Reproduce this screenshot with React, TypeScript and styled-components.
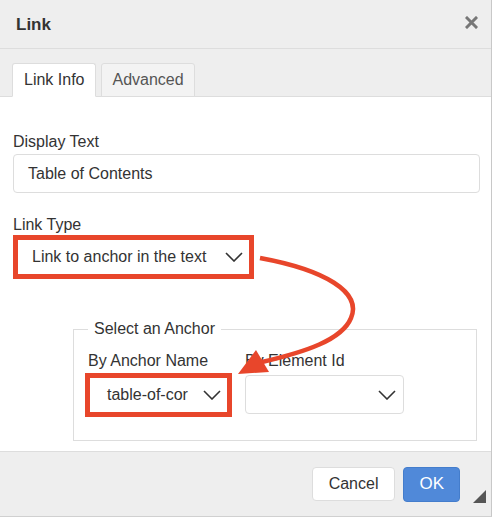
import styled, { createGlobalStyle } from "styled-components";

const Global = createGlobalStyle`
    * { box-sizing: border-box; }
    body { margin: 0; background: #fff; font-family: "Liberation Sans", Arial, sans-serif; color: #333; }
`

const RED = "#e8462b";

const Dialog = styled.div`
    position: relative; width: 492px; height: 517px;
    display: flex; flex-direction: column;
    border-right: 1px solid #c8c8c8; border-bottom: 1px solid #d0d0d0;
    background: #fff;
`
const Header = styled.div`
    height: 49px; padding: 0 13px 0 16px;
    display: flex; align-items: center; justify-content: space-between;
    background: #eee; border-bottom: 1px solid #ddd;
    h1 { margin: 0; font-size: 17px; font-weight: 700; color: #333; padding-top: 1px; }
`
const Close = styled.svg`width: 13px; height: 13px; margin-bottom: 4px;`

const TabBar = styled.div`
    height: 48px; padding-left: 12px;
    display: flex; align-items: flex-end; gap: 5px;
    background: #eee; border-bottom: 1px solid #ddd;
`
const Tab = styled.div<{ $active?: boolean }>`
    height: 34px; padding: 0 ${({ $active }) => $active ? 11 : 10}px; margin-bottom: -1px;
    display: flex; align-items: center;
    font-size: 16px; color: ${({ $active }) => $active ? "#333" : "#555"};
    background: ${({ $active }) => $active ? "#fff" : "#f3f3f3"};
    border: 1px solid #ddd; border-bottom: 1px solid ${({ $active }) => $active ? "#fff" : "#ddd"};
    border-radius: 3px 3px 0 0;
`
const Body = styled.div`
    flex: 1; padding: 36px 11px 0 13px; background: #fff;
`
const Label = styled.div`
    font-size: 16px; line-height: 18px; color: #333; margin-bottom: 3px;
`
const Input = styled.div`
    height: 39px; padding: 0 14px; margin-bottom: 23px;
    display: flex; align-items: center;
    font-size: 16px; color: #333;
    border: 1px solid #ddd; border-radius: 4px;
`
const Select = styled.div<{ $marked?: boolean; $w: number; $pad?: number }>`
    width: ${({ $w }) => $w}px;
    height: ${({ $marked }) => $marked ? 44 : 39}px;
    margin: ${({ $marked }) => $marked ? "-2px 0 0 -3px" : "0"};
    padding: 0 ${({ $marked }) => $marked ? 6 : 7}px 0 ${({ $pad }) => $pad ?? 14}px;
    display: flex; align-items: center; justify-content: space-between;
    font-size: 16px; color: #333; background: #fff;
    border: ${({ $marked }) => $marked ? `5px solid ${RED}` : "1px solid #ddd"};
    border-radius: ${({ $marked }) => $marked ? 0 : 4}px;
`
const LinkTypeRow = styled.div`padding-left: 3px;`
const Chevron = styled.svg`width: 18px; height: 10px; flex-shrink: 0;`

const Fieldset = styled.fieldset`
    margin: 41px 0 0 60px; width: 404px;
    padding: 14px 14px 23px;
    border: 1px solid #ddd;
    legend { padding: 0 6px; font-size: 16px; line-height: 18px; color: #333; }
`
const Columns = styled.div`
    display: grid; grid-template-columns: 141px 159px; column-gap: 17px; align-items: start;
    ${Label} { margin-bottom: 5px; }
`
const Col = styled.div<{ $shift?: number }>`margin-left: ${({ $shift }) => $shift ?? 0}px;`

const Footer = styled.div`
    position: relative; height: 65px; padding-right: 31px;
    display: flex; align-items: center; justify-content: flex-end; gap: 8px;
    background: #eee; border-top: 1px solid #ddd;
`
const Button = styled.button<{ $primary?: boolean }>`
    height: ${({ $primary }) => $primary ? 35 : 34}px;
    padding: 0 ${({ $primary }) => $primary ? 15 : 16}px;
    font-family: inherit; font-size: ${({ $primary }) => $primary ? 17 : 16}px;
    color: ${({ $primary }) => $primary ? "#fff" : "#333"};
    background: ${({ $primary }) => $primary ? "#5089d9" : "#fff"};
    border: 1px solid ${({ $primary }) => $primary ? "#447dcc" : "#ddd"};
    border-radius: 4px;
`
const Resize = styled.div`
    position: absolute; right: 5px; bottom: 13px;
    width: 0; height: 0;
    border-left: 13px solid transparent; border-bottom: 13px solid #555;
`
const Arrow = styled.svg`
    position: absolute; left: 0; top: 0; width: 492px; height: 517px; pointer-events: none;
`

const Down = () => (
    <Chevron viewBox="0 0 18 10">
        <polyline points="1,1 9,9 17,1" fill="none" stroke="#333" strokeWidth="1.6" />
    </Chevron>
)

function App() {
    return (
        <>
            <Global />
            <Dialog>
                <Header>
                    <h1>Link</h1>
                    <Close viewBox="0 0 13 13">
                        <path d="M2 2 L11 11 M11 2 L2 11" stroke="#777" strokeWidth="3" strokeLinecap="square" />
                    </Close>
                </Header>
                <TabBar>
                    <Tab $active>Link Info</Tab>
                    <Tab>Advanced</Tab>
                </TabBar>
                <Body>
                    <Label>Display Text</Label>
                    <Input>Table of Contents</Input>

                    <Label>Link Type</Label>
                    <LinkTypeRow>
                        <Select $marked $w={241}>
                            <span>Link to anchor in the text</span>
                            <Down />
                        </Select>
                    </LinkTypeRow>

                    <Fieldset>
                        <legend>Select an Anchor</legend>
                        <Columns>
                            <Col>
                                <Label>By Anchor Name</Label>
                                <Select $marked $w={147} $pad={17}>
                                    <span>table-of-cor</span>
                                    <Down />
                                </Select>
                            </Col>
                            <Col $shift={-1}>
                                <Label>By Element Id</Label>
                                <Select $w={159}>
                                    <span />
                                    <Down />
                                </Select>
                            </Col>
                        </Columns>
                    </Fieldset>
                </Body>
                <Footer>
                    <Button>Cancel</Button>
                    <Button $primary>OK</Button>
                    <Resize />
                </Footer>

                <Arrow viewBox="0 0 492 517">
                    <path d="M260 258 C 325 270, 362 292, 351 318 C 342 340, 305 352, 262 362"
                        fill="none" stroke={RED} strokeWidth="4.5" />
                    <polygon points="238,374 256,350 269,372" fill={RED} />
                </Arrow>
            </Dialog>
        </>
    )
}
export default App;
